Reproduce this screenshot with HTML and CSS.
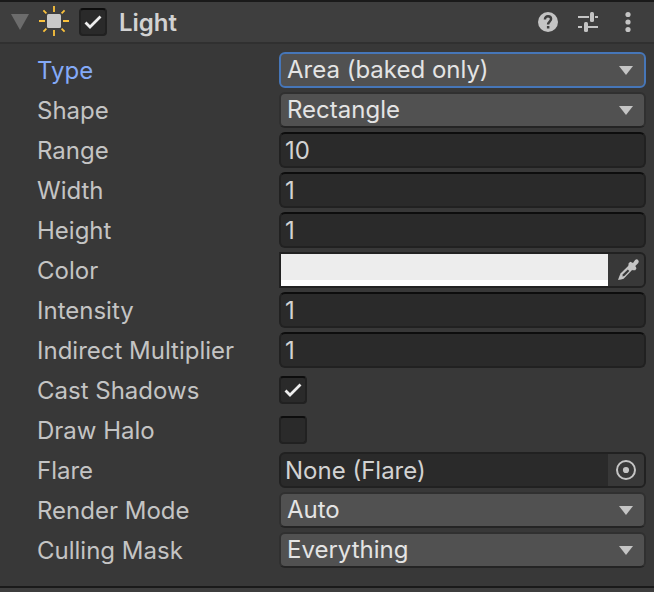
FILE: index.html
```html
<!DOCTYPE html>
<html lang="en">
<head>
<meta charset="utf-8">
<title>Light</title>
<link rel="stylesheet" href="styles.css">
</head>
<body>
<main class="inspector">
  <header class="header">
    <button class="icon-button foldout" type="button" aria-label="Collapse Light">
      <svg width="18" height="16" viewBox="0 0 18 16"><path d="M0 0h18L9 16z" fill="#6c6c6c"/></svg>
    </button>
    <svg class="light-icon" width="30" height="30" viewBox="0 0 30 30" aria-hidden="true">
      <path d="M15 0v6M15 24v6M0 15h6M24 15h6M4.4 4.4l3 3M22.6 22.6l3 3M4.4 25.6l3-3M22.6 7.4l3-3" stroke="#fbc23c" stroke-width="1.8"/>
      <rect x="8" y="8" width="14" height="14" rx="1.5" fill="#c8c8c8"/>
    </svg>
    <input class="checkbox" type="checkbox" id="enabled" checked>
    <label class="title" for="enabled">Light</label>
    <div class="actions">
      <button class="icon-button" type="button" aria-label="Help">
        <svg width="20" height="20" viewBox="0 0 20 20"><circle cx="10" cy="10" r="10" fill="#c4c4c4"/><path d="M6.9 7.4C6.9 5.3 8.2 4.2 10 4.2s3.1 1.1 3.1 2.8c0 2.3-3 2.4-3 5.6" fill="none" stroke="#3e3e3e" stroke-width="2.4"/><rect x="8.9" y="14" width="2.5" height="2.5" fill="#3e3e3e"/></svg>
      </button>
      <button class="icon-button" type="button" aria-label="Presets">
        <svg width="20" height="20" viewBox="0 0 20 20" fill="#c4c4c4"><path d="M0 4h11v2H0zM17 4h3v2h-3zM0 14h4v2H0zM10 14h10v2H10z"/><rect x="12" width="4" height="10" rx="1.5"/><rect x="6" y="10" width="4" height="10" rx="1.5"/></svg>
      </button>
      <button class="icon-button" type="button" aria-label="More options">
        <svg width="20" height="20" viewBox="0 0 20 20" fill="#c4c4c4"><circle cx="10" cy="2.5" r="2.6"/><circle cx="10" cy="10" r="2.6"/><circle cx="10" cy="17.5" r="2.6"/></svg>
      </button>
    </div>
  </header>
  <form class="properties">
    <div class="row">
      <label class="label label-active" for="type">Type</label>
      <div class="dropdown dropdown-active"><select id="type"><option>Area (baked only)</option></select><svg class="arrow" width="14" height="9" viewBox="0 0 14 9" aria-hidden="true"><path d="M0 0h14L7 9z"/></svg></div>
    </div>
    <div class="row">
      <label class="label" for="shape">Shape</label>
      <div class="dropdown"><select id="shape"><option>Rectangle</option></select><svg class="arrow" width="14" height="9" viewBox="0 0 14 9" aria-hidden="true"><path d="M0 0h14L7 9z"/></svg></div>
    </div>
    <div class="row">
      <label class="label" for="range">Range</label>
      <input class="field" id="range" type="text" value="10">
    </div>
    <div class="row">
      <label class="label" for="width">Width</label>
      <input class="field" id="width" type="text" value="1">
    </div>
    <div class="row">
      <label class="label" for="height">Height</label>
      <input class="field" id="height" type="text" value="1">
    </div>
    <div class="row">
      <label class="label" for="color">Color</label>
      <div class="composite color-field">
        <button class="swatch" id="color" type="button"></button>
        <button class="icon-button side" type="button" aria-label="Pick color">
          <svg width="24" height="24" viewBox="-4 -1 24 24"><path d="M11.2 6.1L2.5 14.6Q1.2 17.6 0 21q3.2-.2 5.6-1.3l9.5-9.6z" fill="#c4c4c4"/><path d="M9.8 10.5l1.5 1.5-4.9 4.9-2 .6.5-2.2z" fill="#383838"/><path d="M10.6 4.2l1.8-1.4 2.6 1.3L17.1.9q1.7-1.3 3 0t.2 3.1l-3 2.9 1.2 2.4-1.2 2-2.8-.1-4.1-4.3z" fill="#c4c4c4"/></svg>
        </button>
      </div>
    </div>
    <div class="row">
      <label class="label" for="intensity">Intensity</label>
      <input class="field" id="intensity" type="text" value="1">
    </div>
    <div class="row">
      <label class="label" for="indirect">Indirect Multiplier</label>
      <input class="field" id="indirect" type="text" value="1">
    </div>
    <div class="row">
      <label class="label" for="shadows">Cast Shadows</label>
      <input class="checkbox" id="shadows" type="checkbox" checked>
    </div>
    <div class="row">
      <label class="label" for="halo">Draw Halo</label>
      <input class="checkbox" id="halo" type="checkbox">
    </div>
    <div class="row">
      <label class="label" for="flare">Flare</label>
      <div class="composite">
        <input class="object" id="flare" type="text" value="None (Flare)" readonly>
        <button class="icon-button side" type="button" aria-label="Select flare">
          <svg width="20" height="20" viewBox="0 0 20 20"><circle cx="10" cy="10" r="9" fill="none" stroke="#c4c4c4" stroke-width="2"/><circle cx="10" cy="10" r="3.1" fill="#c4c4c4"/></svg>
        </button>
      </div>
    </div>
    <div class="row">
      <label class="label" for="mode">Render Mode</label>
      <div class="dropdown"><select id="mode"><option>Auto</option></select><svg class="arrow" width="14" height="9" viewBox="0 0 14 9" aria-hidden="true"><path d="M0 0h14L7 9z"/></svg></div>
    </div>
    <div class="row">
      <label class="label" for="mask">Culling Mask</label>
      <div class="dropdown"><select id="mask"><option>Everything</option></select><svg class="arrow" width="14" height="9" viewBox="0 0 14 9" aria-hidden="true"><path d="M0 0h14L7 9z"/></svg></div>
    </div>
  </form>
</main>
</body>
</html>
```
FILE: styles.css
```css
* {
  box-sizing: border-box;
}

body {
  margin: 0;
  background: #3e3e3e;
  color: #c4c4c4;
  font: 375 24px/32px Inter, "Liberation Sans", sans-serif;
}

input,
select,
button {
  margin: 0;
  padding: 0;
  border: 0;
  border-radius: 0;
  background: none;
  color: inherit;
  font: inherit;
  appearance: none;
  outline: none;
}

svg {
  display: block;
  flex: none;
  overflow: visible;
}

.inspector {
  background: #383838;
  border-top: 2px solid #1a1a1a;
  border-bottom: 2px solid #1a1a1a;
}

.header {
  display: flex;
  align-items: center;
  height: 42px;
  padding: 0 16px 0 11px;
  background: #3e3e3e;
  border-bottom: 2px solid #303030;
}

.icon-button {
  display: flex;
  align-items: center;
  justify-content: center;
}

.light-icon {
  margin: 0 10px 2px;
}

.title {
  margin-left: 12px;
  padding-top: 2px;
  color: #d2d2d2;
  font-weight: 600;
}

.actions {
  display: flex;
  gap: 20px;
  margin-left: auto;
}

.properties {
  display: flex;
  flex-direction: column;
  gap: 4px;
  padding: 8px 8px 18px 37px;
}

.row {
  display: grid;
  grid-template-columns: 242px minmax(0, 1fr);
  align-items: center;
  height: 36px;
}

.label {
  padding-top: 2px;
}

.label-active {
  color: #84aaf8;
}

.dropdown {
  position: relative;
  height: 36px;
  border: 2px solid #303030;
  border-bottom-color: #242424;
  border-radius: 6px;
  background: #515151;
}

.dropdown-active {
  border-color: #4676b8;
}

.dropdown select {
  display: block;
  width: 100%;
  height: 32px;
  padding: 0 32px 0 6px;
  color: #e4e4e4;
}

.arrow {
  position: absolute;
  top: 12px;
  right: 11px;
  fill: #c4c4c4;
  pointer-events: none;
}

.field,
.checkbox,
.composite {
  border: 2px solid #212121;
  border-radius: 6px;
  background: #2a2a2a;
}

.field,
.checkbox {
  border-top-color: #0d0d0d;
}

.field {
  width: 100%;
  height: 36px;
  padding: 0 4px;
  color: #d2d2d2;
}

.checkbox {
  display: block;
  flex: none;
  width: 28px;
  height: 28px;
  border-radius: 4px;
}

.checkbox:checked {
  background: #2a2a2a url("data:image/svg+xml,%3Csvg xmlns='http://www.w3.org/2000/svg' viewBox='0 0 24 24'%3E%3Cpath d='M4.5 12.5l4.5 4.5L19.5 6.5' fill='none' stroke='%23eee' stroke-width='2.8'/%3E%3C/svg%3E") center / 24px 24px no-repeat;
}

.composite {
  display: flex;
  height: 36px;
  overflow: hidden;
}

.color-field {
  border-radius: 0 6px 6px 0;
}

.swatch {
  flex: 1;
  background: #ededed;
  border-bottom: 6px solid #fff;
}

.side {
  flex: none;
  width: 36px;
  background: #383838;
}

.object {
  flex: 1;
  min-width: 0;
  padding: 2px 4px 0;
  color: #d2d2d2;
}
```
